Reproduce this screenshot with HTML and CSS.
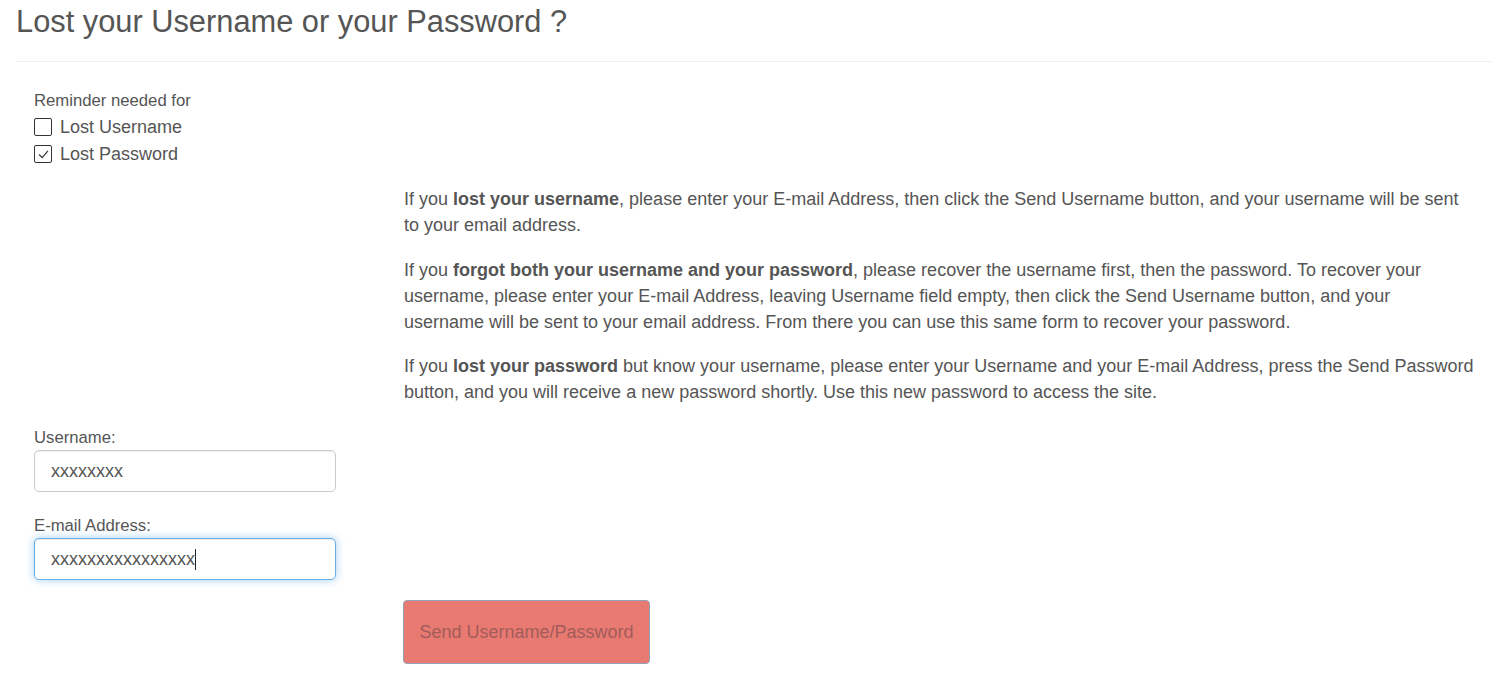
FILE: index.html
```html
<!DOCTYPE html>
<html lang="en">
<head>
<meta charset="utf-8">
<title>Lost your Username or your Password ?</title>
<link rel="stylesheet" href="styles.css">
</head>
<body>
<div class="page">
  <h1 class="page-title">Lost your Username or your Password ?</h1>
  <form class="remind-form">
    <div class="row">
      <div class="col-left">
        <div class="group-title">Reminder needed for</div>
        <label class="check"><span class="box"></span><span>Lost Username</span></label>
        <label class="check"><span class="box checked"><svg viewBox="0 0 17 17" width="15" height="15"><path d="M3.5 8.5 L7 12 L13.5 4.5" fill="none" stroke="#333" stroke-width="1.3"/></svg></span><span>Lost Password</span></label>
      </div>
    </div>
    <div class="row">
      <div class="col-left"></div>
      <div class="col-right help">
        <p>If you <b>lost your username</b>, please enter your E-mail Address, then click the Send Username button, and your username will be sent to your email address.</p>
        <p>If you <b>forgot both your username and your password</b>, please recover the username first, then the password. To recover your username, please enter your E-mail Address, leaving Username field empty, then click the Send Username button, and your username will be sent to your email address. From there you can use this same form to recover your password.</p>
        <p>If you <b>lost your password</b> but know your username, please enter your Username and your E-mail Address, press the Send Password button, and you will receive a new password shortly. Use this new password to access the site.</p>
      </div>
    </div>
    <div class="row">
      <div class="col-left">
        <div class="field">
          <label class="field-label" for="username">Username:</label>
          <input class="input" id="username" type="text" value="xxxxxxxx">
        </div>
        <div class="field field-email">
          <label class="field-label" for="email">E-mail Address:</label>
          <div class="input-wrap">
            <input class="input focused" id="email" type="text" value="xxxxxxxxxxxxxxxx">
            <span class="caret"></span>
          </div>
        </div>
      </div>
    </div>
    <div class="row">
      <div class="col-left"></div>
      <div class="col-right">
        <button type="button" class="btn-send">Send Username/Password</button>
      </div>
    </div>
  </form>
</div>
</body>
</html>
```

FILE: styles.css
```css
* { box-sizing: border-box; }

html, body {
  margin: 0;
  padding: 0;
  background: #fff;
}

body {
  font-family: "Liberation Sans", Arial, sans-serif;
  color: #555;
  font-size: 18px;
}

.page {
  padding: 0 8px 0 16px;
}

.page-title {
  margin: 5px 0 0;
  padding-bottom: 22px;
  border-bottom: 1px solid #eee;
  font-size: 30.8px;
  line-height: 34px;
  font-weight: normal;
  color: #555;
}

.remind-form {
  margin-top: 24.5px;
  padding-left: 18px;
}

.row {
  display: grid;
  grid-template-columns: 370px 1070px;
}

.group-title {
  font-size: 16.7px;
  line-height: 27px;
}

.check {
  display: flex;
  align-items: center;
  gap: 8px;
  font-size: 18px;
  line-height: 27px;
}

.box {
  width: 18px;
  height: 18px;
  border: 1px solid #333;
  border-radius: 2px;
  display: flex;
  align-items: center;
  justify-content: center;
  background: #fff;
}

.help {
  padding-top: 18.5px;
}

.help p {
  margin: 0 0 18.5px;
  line-height: 26px;
  font-size: 18px;
}

.help b {
  font-weight: bold;
}

.field-label {
  display: block;
  font-size: 16.7px;
  line-height: 27px;
  margin-bottom: -0.5px;
}

.field-email {
  margin-top: 19.5px;
}

.input-wrap {
  position: relative;
  width: 302px;
}

.input {
  display: block;
  width: 302px;
  height: 42px;
  padding: 0 16px;
  border: 1px solid #ccc;
  border-radius: 5px;
  font-family: "Liberation Sans", Arial, sans-serif;
  font-size: 18px;
  color: #555;
  background: #fff;
  box-shadow: inset 0 1px 1px rgba(0, 0, 0, 0.075);
  outline: none;
}

.input.focused {
  border-color: #66afe9;
  box-shadow: inset 0 1px 1px rgba(0, 0, 0, 0.075), 0 0 8px rgba(102, 175, 233, 0.6);
}

.caret {
  position: absolute;
  left: 161px;
  top: 11px;
  width: 1px;
  height: 21px;
  background: #222;
}

.btn-send {
  margin-top: 20px;
  margin-left: -1px;
  width: 247px;
  height: 64px;
  padding: 0;
  white-space: nowrap;
  text-align: center;
  border: 1px solid #8fa2b6;
  border-radius: 4px;
  background: #e87a72;
  color: #a35c5a;
  font-family: "Liberation Sans", Arial, sans-serif;
  font-size: 18px;
  cursor: pointer;
}
```
